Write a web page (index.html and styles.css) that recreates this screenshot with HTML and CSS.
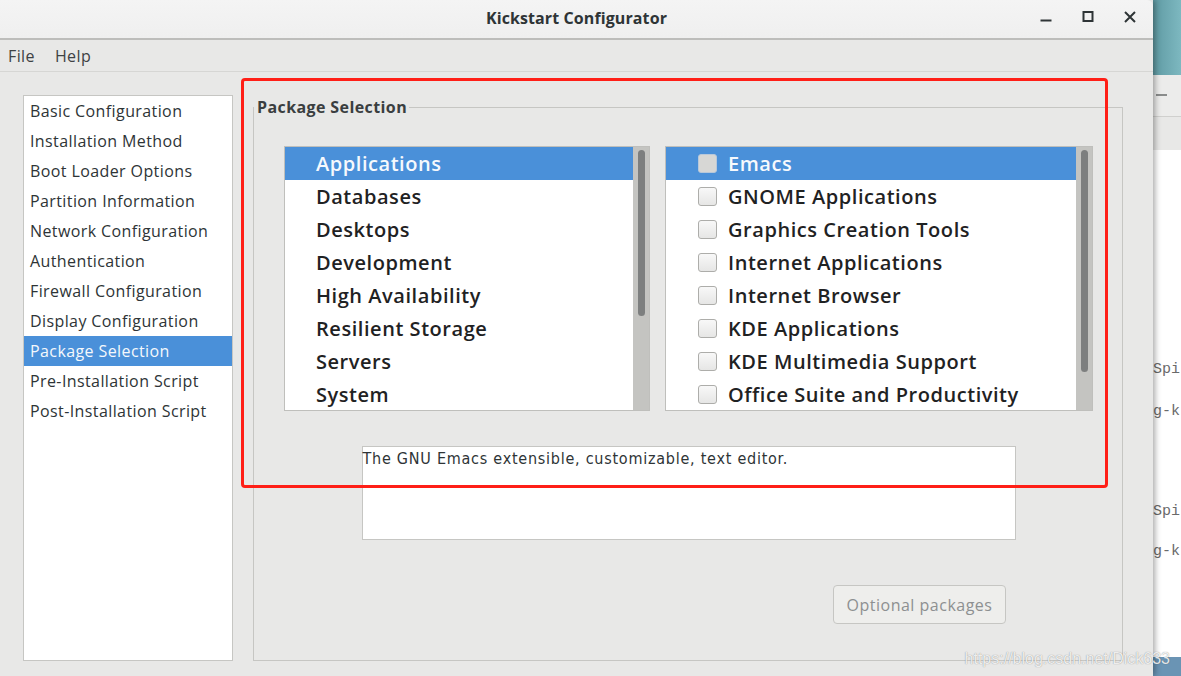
FILE: index.html
```html
<!DOCTYPE html>
<html lang="en">
<head>
    <meta charset="UTF-8">
    <title>Kickstart Configurator</title>
    <link rel="stylesheet" href="styles.css">
</head>
<body>

    <div class="desktop">
        <div class="window">
            <!-- Title bar -->
            <div class="titlebar">
                <div></div>
                <div class="title">Kickstart Configurator</div>
                <div class="controls">
                    <span class="ctl">
                        <svg width="12" height="12" viewBox="0 0 12 12"><path d="M0.5 9.5h11" stroke="#2e3436" stroke-width="2"/></svg>
                    </span>
                    <span class="ctl">
                        <svg width="12" height="12" viewBox="0 0 12 12"><rect x="1.5" y="1" width="9" height="9" fill="none" stroke="#2e3436" stroke-width="2"/></svg>
                    </span>
                    <span class="ctl">
                        <svg width="12" height="12" viewBox="0 0 12 12"><path d="M1 1l10 10M11 1L1 11" stroke="#2e3436" stroke-width="2"/></svg>
                    </span>
                </div>
            </div>

            <!-- Menu bar -->
            <div class="menubar">
                <span class="menu-item">File</span>
                <span class="menu-item">Help</span>
            </div>

            <div class="content">
                <ul class="sidebar">
                    <li>Basic Configuration</li>
                    <li>Installation Method</li>
                    <li>Boot Loader Options</li>
                    <li>Partition Information</li>
                    <li>Network Configuration</li>
                    <li>Authentication</li>
                    <li>Firewall Configuration</li>
                    <li>Display Configuration</li>
                    <li class="selected">Package Selection</li>
                    <li>Pre-Installation Script</li>
                    <li>Post-Installation Script</li>
                </ul>

                <fieldset class="frame">
                    <legend>Package Selection</legend>

                    <div class="lists">
                        <div class="list groups">
                            <ul class="rows">
                                <li class="selected">Applications</li>
                                <li>Databases</li>
                                <li>Desktops</li>
                                <li>Development</li>
                                <li>High Availability</li>
                                <li>Resilient Storage</li>
                                <li>Servers</li>
                                <li>System</li>
                            </ul>
                            <div class="trough"><div class="thumb thumb-left"></div></div>
                        </div>

                        <div class="list packages">
                            <ul class="rows">
                                <li class="selected"><span class="check"></span>Emacs</li>
                                <li><span class="check"></span>GNOME Applications</li>
                                <li><span class="check"></span>Graphics Creation Tools</li>
                                <li><span class="check"></span>Internet Applications</li>
                                <li><span class="check"></span>Internet Browser</li>
                                <li><span class="check"></span>KDE Applications</li>
                                <li><span class="check"></span>KDE Multimedia Support</li>
                                <li><span class="check"></span>Office Suite and Productivity</li>
                            </ul>
                            <div class="trough"><div class="thumb thumb-right"></div></div>
                        </div>
                    </div>

                    <div class="description">The GNU Emacs extensible, customizable, text editor.</div>

                    <div class="button-row">
                        <button class="btn" disabled>Optional packages</button>
                    </div>
                </fieldset>
            </div>

            <!-- red annotation box drawn over the screenshot -->
            <div class="annotation"></div>
        </div>

        <!-- window behind, peeking out on the right -->
        <div class="behind">
            <div class="behind-top"></div>
            <div class="behind-header"><span class="dash"></span></div>
            <div class="behind-sub"></div>
            <div class="behind-body">
                <div class="mono l1">Spi</div>
                <div class="mono l2">g-k</div>
                <div class="mono l3">Spi</div>
                <div class="mono l4">g-k</div>
            </div>
            <div class="behind-bottom"></div>
        </div>

        <div class="watermark">https://blog.csdn.net/Dick633</div>
    </div>

</body>
</html>
```

FILE: styles.css
```css
body {
    margin: 0;
    padding: 0;
    width: 1181px;
    height: 676px;
    overflow: hidden;
    font-family: "Open Sans", "DejaVu Sans", sans-serif;
    color: #2e3436;
}

.desktop {
    position: relative;
    display: flex;
    width: 1181px;
    height: 676px;
}

.window {
    position: relative;
    width: 1153px;
    height: 676px;
    display: flex;
    flex-direction: column;
    background: #e8e8e7;
    box-shadow: 2px 0 6px rgba(0, 0, 0, 0.35);
    z-index: 2;
}

/* Title bar */
.titlebar {
    height: 38px;
    display: grid;
    grid-template-columns: 1fr auto 1fr;
    align-items: center;
    background: linear-gradient(#f4f4f4, #efefef);
    border-bottom: 2px solid #bdbdbb;
    border-top-right-radius: 6px;
}

.title {
    font-weight: 700;
    font-size: 16px;
    letter-spacing: 0.1px;
    padding-bottom: 3px;
}

.controls {
    display: flex;
    justify-content: flex-end;
    padding-right: 2px;
}

.ctl {
    width: 42px;
    height: 30px;
    display: flex;
    align-items: center;
    justify-content: center;
    margin-top: -4px;
}

/* Menu bar */
.menubar {
    height: 31px;
    display: flex;
    align-items: center;
    gap: 20px;
    padding-left: 8px;
    border-bottom: 1px solid #d6d6d4;
    font-size: 16px;
    letter-spacing: 0.4px;
    color: #3e4244;
}

/* Main area */
.content {
    flex: 1;
    display: flex;
    gap: 20px;
    padding: 23px 30px 15px 23px;
    min-height: 0;
}

.sidebar {
    list-style: none;
    margin: 0;
    padding: 0;
    width: 208px;
    background: white;
    border: 1px solid #c6c6c3;
    font-size: 16px;
    letter-spacing: 0.4px;
}

.sidebar li {
    height: 30px;
    line-height: 30px;
    padding-left: 6px;
    white-space: nowrap;
}

.sidebar li.selected {
    background: #4a90d9;
    color: #f4f8fc;
}

.frame {
    flex: 1;
    margin: 2px 0 0 0;
    padding: 29px 29px 0 30px;
    border: 1px solid #c6c6c3;
    min-width: 0;
    display: flex;
    flex-direction: column;
    align-items: center;
}

.frame legend {
    margin-left: -30px;
    padding: 0 2px 0 3px;
    font-weight: 700;
    font-size: 16px;
    line-height: 20px;
    letter-spacing: 0.4px;
    color: #3a3e40;
}

.lists {
    display: flex;
    gap: 15px;
    align-self: stretch;
}

.list {
    display: flex;
    height: 263px;
    border: 1px solid #bfbfbc;
    background: white;
}

.groups {
    width: 364px;
}

.packages {
    width: 426px;
}

.rows {
    list-style: none;
    margin: 0;
    padding: 0;
    flex: 1;
    font-size: 20px;
    font-weight: 600;
    letter-spacing: 0.55px;
    color: #1f2223;
}

.rows li {
    height: 33px;
    display: flex;
    align-items: center;
    white-space: nowrap;
}

.groups .rows li {
    padding-left: 31px;
}

.packages .rows li {
    padding-left: 32px;
}

.rows li.selected {
    background: #4a90d9;
    color: #f6f9fd;
}

.check {
    width: 17px;
    height: 17px;
    border: 1px solid #adadaa;
    border-radius: 3px;
    background: linear-gradient(#f8f8f8, #e6e6e5);
    margin-right: 11px;
    flex: none;
}

.rows li.selected .check {
    background: #d7d7d5;
    border-color: #b8c8da;
}

.trough {
    width: 16px;
    background: #c4c4c1;
    padding-top: 3px;
    display: flex;
    justify-content: center;
}

.thumb {
    width: 7px;
    border-radius: 4px;
    background: #7d7f7f;
}

.thumb-left {
    height: 166px;
}

.thumb-right {
    height: 222px;
}

.description {
    margin-top: 35px;
    width: 652px;
    height: 92px;
    box-sizing: content-box;
    background: white;
    border: 1px solid #c6c6c3;
    font-family: "DejaVu Sans Condensed", "DejaVu Sans", sans-serif;
    font-stretch: condensed;
    font-size: 16px;
    letter-spacing: 0.75px;
    line-height: 24px;
    color: #2e3436;
}

.button-row {
    align-self: stretch;
    display: flex;
    justify-content: flex-end;
    padding-right: 87px;
    margin-top: 45px;
}

.btn {
    width: 173px;
    height: 39px;
    border: 1px solid #c6c6c3;
    border-radius: 4px;
    background: #eeeeec;
    font-family: "Open Sans", "DejaVu Sans", sans-serif;
    font-size: 16px;
    letter-spacing: 0.5px;
    color: #8d9091;
}

/* Red annotation box */
.annotation {
    position: absolute;
    left: 241px;
    top: 78px;
    width: 861px;
    height: 404px;
    border: 3px solid #ff1f17;
    border-radius: 4px;
    pointer-events: none;
}

/* Window behind */
.behind {
    width: 28px;
    display: flex;
    flex-direction: column;
}

.behind-top {
    height: 75px;
    background: linear-gradient(90deg, #5f9aa3, #7db8c0);
}

.behind-header {
    height: 42px;
    background: #ececeb;
    border-bottom: 1px solid #d0d0ce;
    display: flex;
    align-items: center;
    box-sizing: border-box;
}

.dash {
    width: 11px;
    height: 2px;
    background: #8a8c8c;
    margin-left: 3px;
    margin-top: -2px;
}

.behind-sub {
    height: 33px;
    background: #e8e8e7;
}

.behind-body {
    flex: 1;
    background: white;
    overflow: hidden;
}

.mono {
    font-family: "Liberation Mono", monospace;
    font-size: 15px;
    line-height: 18px;
    color: #6a6a6a;
    white-space: nowrap;
}

.l1 { margin-top: 211px; }
.l2 { margin-top: 24px; }
.l3 { margin-top: 82px; }
.l4 { margin-top: 22px; }

.behind-bottom {
    height: 19px;
    background: #6a94b4;
}

.watermark {
    position: absolute;
    right: 11px;
    bottom: 8px;
    z-index: 3;
    font-family: "Liberation Sans", Arial, sans-serif;
    font-size: 16px;
    color: rgba(255, 255, 255, 0.85);
    text-shadow: 0 0 1px rgba(60, 60, 60, 0.6);
}
```
